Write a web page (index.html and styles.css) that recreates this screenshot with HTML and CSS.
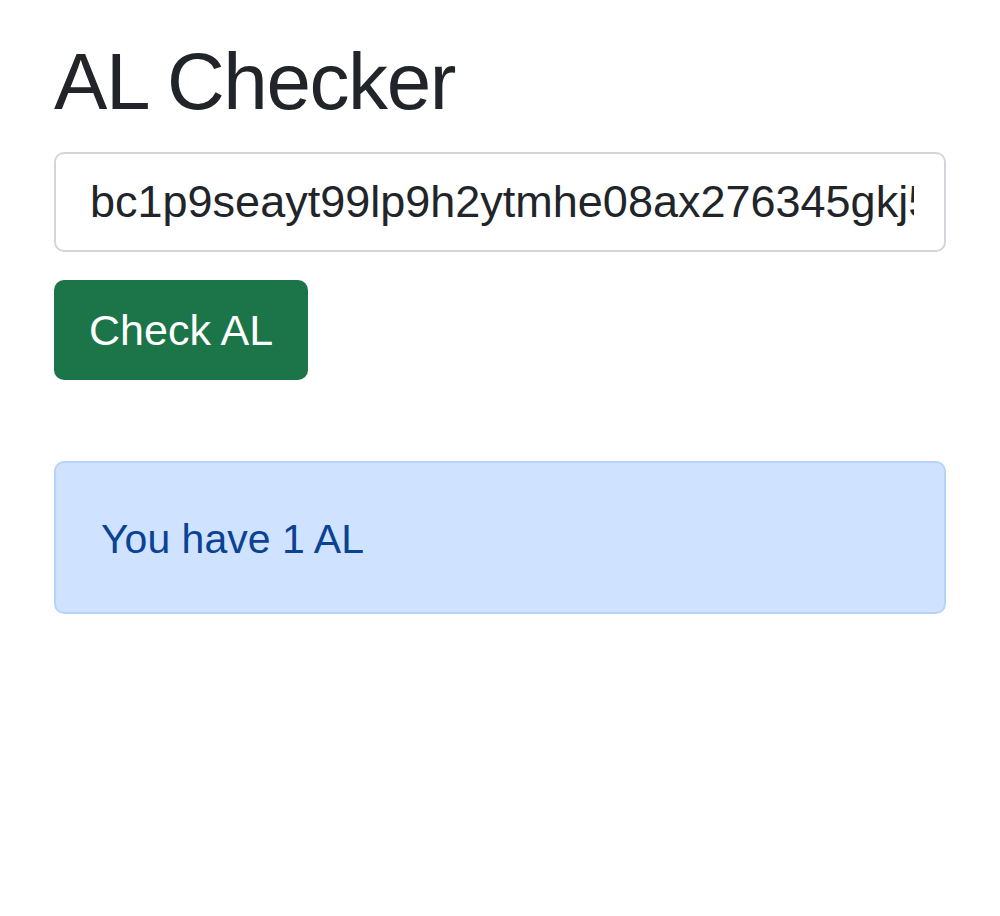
FILE: index.html
```html
<!DOCTYPE html>
<html lang="en">
<head>
<meta charset="utf-8">
<title>AL Checker</title>
<link rel="stylesheet" href="styles.css">
</head>
<body>
<main class="container">
  <h1 class="title">AL Checker</h1>
  <form class="checker">
    <input class="field" type="text" value="bc1p9seayt99lp9h2ytmhe08ax276345gkj5xq0s7m3n6yq2">
    <button class="btn" type="button">Check AL</button>
  </form>
  <div class="alert">You have 1 AL</div>
</main>
</body>
</html>
```

FILE: styles.css
```css
html, body {
  margin: 0;
  padding: 0;
  background: #ffffff;
}

body {
  font-family: "Liberation Sans", Arial, sans-serif;
  color: #212529;
}

.container {
  padding: 34px 54px 0 54px;
}

.title {
  margin: 0;
  font-size: 80px;
  font-weight: 400;
  letter-spacing: -1.4px;
  line-height: 96px;
  color: #212529;
}

.checker {
  display: flex;
  flex-direction: column;
  align-items: flex-start;
  gap: 28px;
  margin-top: 22px;
}

.field {
  box-sizing: border-box;
  width: 100%;
  height: 100px;
  padding: 0 30px 0 34px;
  border: 2px solid #d4d5db;
  border-radius: 10px;
  font-family: "Liberation Sans", Arial, sans-serif;
  font-size: 45px;
  color: #212529;
  background: #fff;
  outline: none;
}

.btn {
  box-sizing: border-box;
  height: 100px;
  padding: 0 35px;
  border: none;
  border-radius: 10px;
  background: #1c7548;
  color: #ffffff;
  font-family: "Liberation Sans", Arial, sans-serif;
  font-size: 43px;
}

.alert {
  box-sizing: border-box;
  margin-top: 81px;
  height: 153px;
  display: flex;
  align-items: center;
  padding: 4px 46px 0 45px;
  background: #cfe2ff;
  border: 2px solid #b9d3f8;
  border-radius: 10px;
  color: #0b4293;
  font-size: 41px;
}
```
